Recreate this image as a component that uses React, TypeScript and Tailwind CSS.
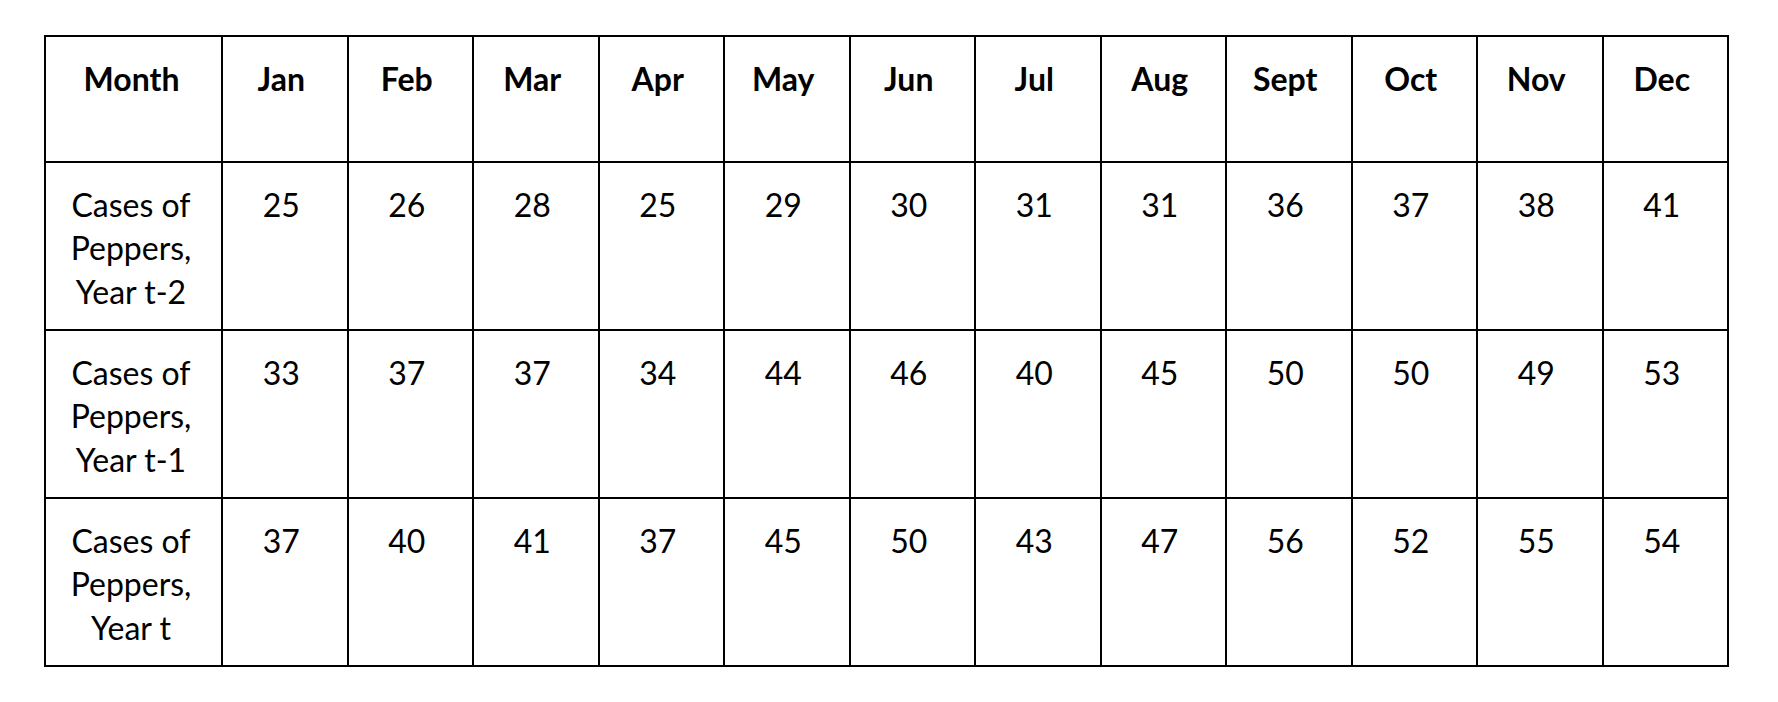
import React from "react"

// Months in table header
const months = ["Jan", "Feb", "Mar", "Apr", "May", "Jun", "Jul", "Aug", "Sept", "Oct", "Nov", "Dec"]

// Cases of peppers per year
const rows = [
  { label: "Year t-2", values: [25, 26, 28, 25, 29, 30, 31, 31, 36, 37, 38, 41] },
  { label: "Year t-1", values: [33, 37, 37, 34, 44, 46, 40, 45, 50, 50, 49, 53] },
  { label: "Year t", values: [37, 40, 41, 37, 45, 50, 43, 47, 56, 52, 55, 54] },
]

export default function App() {
  return (
    <div className="min-h-[702px] w-[1778px] bg-white pl-[44px] pt-[35px] text-black font-['Lato','Liberation_Sans',sans-serif] text-[32px] leading-[43.3px]">
      <table className="table-fixed border-collapse w-[1683px]">
        <colgroup>
          <col className="w-[177px]" />
          {months.map((m) => (
            <col key={m} className="w-[125.5px]" />
          ))}
        </colgroup>
        <thead>
          <tr className="h-[126px]">
            <th className="border-2 border-black align-top text-center pt-[20px] pr-[4px] font-bold">Month</th>
            {months.map((m) => (
              <th key={m} className="border-2 border-black align-top text-center pt-[20px] pr-[7px] font-bold">
                {m}
              </th>
            ))}
          </tr>
        </thead>
        <tbody>
          {rows.map((r) => (
            <tr key={r.label} className="h-[168px]">
              <td className="border-2 border-black align-top text-center pt-[20px] pl-0 pr-[5px]">
                Cases of
                <br />
                Peppers,
                <br />
                {r.label}
              </td>
              {r.values.map((v, i) => (
                <td key={i} className="border-2 border-black align-top text-center pt-[20px] pr-[7px]">
                  {v}
                </td>
              ))}
            </tr>
          ))}
        </tbody>
      </table>
    </div>
  )
}
